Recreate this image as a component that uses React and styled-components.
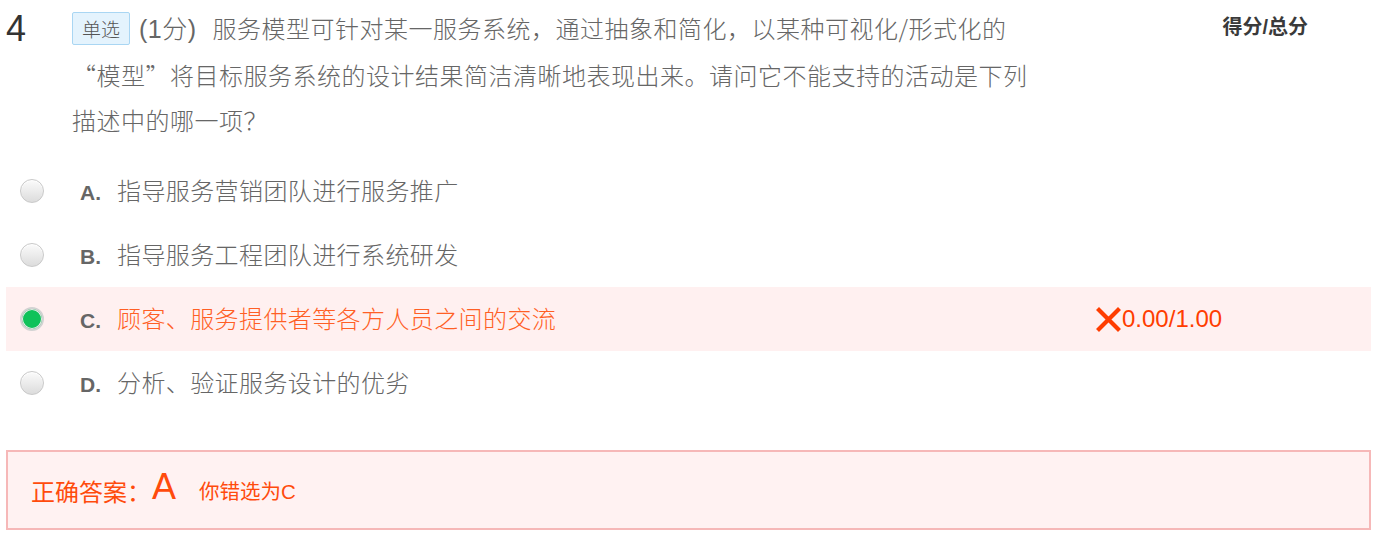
import React from 'react';
import styled, { createGlobalStyle } from 'styled-components';

const GlobalStyle = createGlobalStyle`
	body {
		margin: 0;
		background: #fff;
		font-family: "Liberation Sans", "Noto Sans CJK SC", sans-serif;
	}
`;

const Page = styled.div`
	width: 1365px;
	padding: 5px 0 0 6px;
`;

const Header = styled.div`
	display: grid;
	grid-template-columns: 66px 958px 1fr;
	align-items: start;
`;

const QNumber = styled.div`
	font-size: 36px;
	line-height: 45px;
	color: #333;
	font-family: "Liberation Sans", sans-serif;
	margin-top: 1px;
`;

const Question = styled.div`
	font-size: 24px;
	line-height: 45px;
	color: #666;
	letter-spacing: 0.5px;
	line-break: anywhere;
	font-family: "Noto Sans CJK SC", sans-serif;
	font-weight: 300;
`;

const Tag = styled.span`
	display: inline-block;
	font-size: 19px;
	line-height: 31px;
	padding: 0 9px;
	margin-right: 9px;
	color: #555;
	background: #e4f3fd;
	border: 1px solid #a9d6f3;
	border-radius: 2px;
	vertical-align: 1px;
	letter-spacing: 0;
`;

const Points = styled.span`
	margin-right: 16px;
	letter-spacing: 0.5px;
	font-size: 25px;
	font-family: "Liberation Sans", "Noto Sans CJK SC", sans-serif;
`;

const ScoreHead = styled.div`
	font-size: 20px;
	font-weight: bold;
	color: #3a3a3a;
	line-height: 45px;
	text-align: right;
	padding-right: 63px;
`;

const Options = styled.div`
	margin-top: 17px;
`;

const Row = styled.div`
	display: grid;
	grid-template-columns: 1fr 275px;
	align-items: center;
	height: 64px;
	background: ${(p) => (p.$wrong ? '#fff0f0' : 'transparent')};
`;

const Choice = styled.div`
	display: flex;
	align-items: center;
	padding-left: 14px;
`;

const Radio = styled.span`
	box-sizing: border-box;
	width: 24px;
	height: 24px;
	border-radius: 50%;
	flex-shrink: 0;
	border: ${(p) => (p.$checked ? '2px solid #d2d2d2' : '1px solid #c9c9c9')};
	background: ${(p) => (p.$checked ? '#0fc25a' : 'linear-gradient(#fbfbfb, #dcdcdc)')};
	box-shadow: ${(p) => (p.$checked ? 'inset 0 0 0 1px #ececec' : 'inset 0 1px 1px #fff')};
`;

const Label = styled.span`
	display: flex;
	align-items: baseline;
	margin-left: 36px;
	margin-top: -4px;
`;

const Letter = styled.span`
	width: 37px;
	font-size: 21px;
	font-weight: bold;
	color: #666;
	font-family: "Liberation Sans", sans-serif;
`;

const OptText = styled.span`
	font-size: 24px;
	letter-spacing: 0.4px;
	font-weight: 300;
	font-family: "Noto Sans CJK SC", sans-serif;
	color: ${(p) => (p.$wrong ? '#ff5f25' : '#666')};
`;

const Score = styled.div`
	display: flex;
	align-items: center;
	gap: 1px;
	font-size: 24px;
	color: #ff3d00;
	font-family: "Liberation Sans", sans-serif;
`;

const AnswerBox = styled.div`
	box-sizing: border-box;
	margin-top: 35px;
	height: 80px;
	border: 2px solid #f6b8b8;
	background: #fff2f2;
	display: flex;
	align-items: center;
	padding: 0 0 0 23px;
	color: #ff4b0c;
`;

const AnswerLabel = styled.span`
	font-size: 24px;
	font-family: "Noto Sans CJK SC", sans-serif;
`;

const AnswerLetter = styled.span`
	font-size: 36px;
	margin: 0 23px 6px 1px;
	font-family: "Liberation Sans", sans-serif;
`;

const AnswerNote = styled.span`
	font-size: 20.5px;
`;

const CrossIcon = () => (
	<svg width="25" height="25" viewBox="0 0 25 25">
		<path d="M3 3 L22 22 M22 3 L3 22" stroke="#ff3d00" strokeWidth="4.2" strokeLinecap="square" />
	</svg>
);

const options = [
	{ key: 'A', text: '指导服务营销团队进行服务推广' },
	{ key: 'B', text: '指导服务工程团队进行系统研发' },
	{ key: 'C', text: '顾客、服务提供者等各方人员之间的交流', picked: true },
	{ key: 'D', text: '分析、验证服务设计的优劣' }
];

export default function App() {
	return (
		<Page>
			<GlobalStyle />
			<Header>
				<QNumber>4</QNumber>
				<Question>
					<Tag>单选</Tag>
					<Points>(1分)</Points>
					服务模型可针对某一服务系统，通过抽象和简化，以某种可视化/形式化的“模型”将目标服务系统的设计结果简洁清晰地表现出来。请问它不能支持的活动是下列描述中的哪一项？
				</Question>
				<ScoreHead>得分/总分</ScoreHead>
			</Header>
			<Options>
				{options.map((o) => (
					<Row key={o.key} $wrong={o.picked}>
						<Choice>
							<Radio $checked={o.picked} />
							<Label>
								<Letter>{o.key}.</Letter>
								<OptText $wrong={o.picked}>{o.text}</OptText>
							</Label>
						</Choice>
						{o.picked && (
							<Score>
								<CrossIcon />
								0.00/1.00
							</Score>
						)}
					</Row>
				))}
			</Options>
			<AnswerBox>
				<AnswerLabel>正确答案：</AnswerLabel>
				<AnswerLetter>A</AnswerLetter>
				<AnswerNote>你错选为C</AnswerNote>
			</AnswerBox>
		</Page>
	);
}
